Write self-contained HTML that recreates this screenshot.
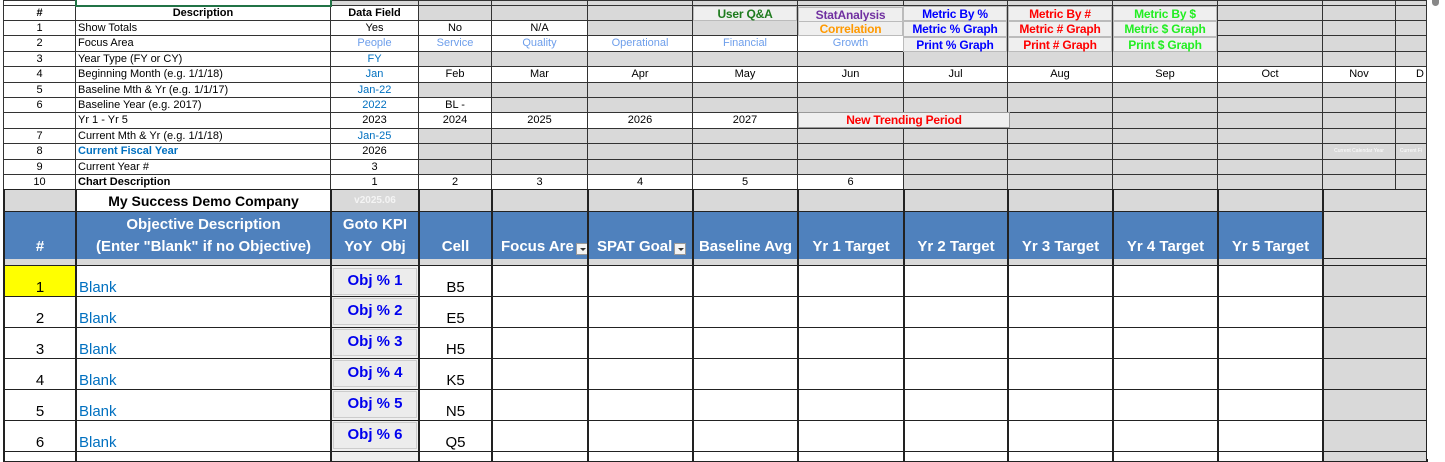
<!DOCTYPE html>
<html><head><meta charset="utf-8"><style>
*{box-sizing:border-box;margin:0;padding:0}
body{width:1445px;height:459px;overflow:hidden;background:#fff;font-family:"Liberation Sans",Arial,sans-serif;position:relative}
table{border-collapse:collapse;table-layout:fixed;position:absolute;left:3px}
td{border:1px solid #333;background:#d9d9d9;font-size:11px;white-space:nowrap;overflow:hidden;padding:0 2px;line-height:1;text-align:center;color:#000}
td.w{background:#fff}
td.l{text-align:left}
.b{font-weight:bold}
.pb{color:#6d9eeb}
.db{color:#0070c0}
#bot td{border-width:1px 2px;border-color:#222}
#bot td.h{background:#4f81bd;color:#fff;font-weight:bold;font-size:15px;line-height:22px;vertical-align:bottom;padding-bottom:0;border-color:#4f81bd #222}
#bot td.n{font-size:15px;vertical-align:bottom;padding-bottom:1px}
.btn{position:absolute;background:#efefef;border:1px solid #bbb;font-weight:bold;font-size:12px;text-align:center;line-height:14px;font-family:"Liberation Sans",Arial,sans-serif;letter-spacing:-0.2px}
.obj{position:absolute;left:333px;width:84px;height:27px;background:#ececec;border:1px solid #ccc;color:#0000ee;font-weight:bold;font-size:15px;text-align:center;line-height:24px}
.dd{display:inline-block;width:12px;height:12px;background:#f4f4f4;border:1px solid #999;vertical-align:bottom;position:relative;margin-left:2px;margin-bottom:3px}
.dd:after{content:"";position:absolute;left:3px;top:4px;border:3px solid transparent;border-top:3px solid #333}
.sb{position:absolute;left:1427px;top:0;width:18px;height:459px;background:#fff}
.sb div{position:absolute;left:5px;top:0;width:7px;height:6px;background:#888;border-radius:0 0 4px 4px}
</style></head><body>
<table id="top" style="top:0;width:1423px">
<colgroup><col style="width:72px"><col style="width:255px"><col style="width:88px"><col style="width:73px"><col style="width:96px"><col style="width:105px"><col style="width:105px"><col style="width:106px"><col style="width:104px"><col style="width:105px"><col style="width:105px"><col style="width:105px"><col style="width:73px"><col style="width:31px"></colgroup>
<tr style="height:5px"><td class="w"></td><td class="w" style="border:2px solid #217346;border-top:0"></td><td></td><td></td><td></td><td></td><td></td><td></td><td></td><td></td><td></td><td></td><td></td><td></td></tr>
<tr style="height:15px"><td class="w b">#</td><td class="w b">Description</td><td class="w b">Data Field</td><td></td><td></td><td></td><td></td><td></td><td></td><td></td><td></td><td></td><td></td><td></td></tr>
<tr style="height:15px"><td class="w">1</td><td class="w l">Show Totals</td><td class="w">Yes</td><td class="w">No</td><td class="w">N/A</td><td></td><td></td><td></td><td></td><td></td><td></td><td></td><td></td><td></td></tr>
<tr style="height:16px"><td class="w">2</td><td class="w l">Focus Area</td><td class="w pb">People</td><td class="w pb">Service</td><td class="w pb">Quality</td><td class="w pb">Operational</td><td class="w pb">Financial</td><td class="w pb">Growth</td><td></td><td></td><td></td><td></td><td></td><td></td></tr>
<tr style="height:15px"><td class="w">3</td><td class="w l">Year Type (FY or CY)</td><td class="w db">FY</td><td></td><td></td><td></td><td></td><td></td><td></td><td></td><td></td><td></td><td></td><td></td></tr>
<tr style="height:16px"><td class="w">4</td><td class="w l">Beginning Month (e.g. 1/1/18)</td><td class="w db">Jan</td><td class="w">Feb</td><td class="w">Mar</td><td class="w">Apr</td><td class="w">May</td><td class="w">Jun</td><td class="w">Jul</td><td class="w">Aug</td><td class="w">Sep</td><td class="w">Oct</td><td class="w">Nov</td><td class="w" style="text-align:right">D</td></tr>
<tr style="height:15px"><td class="w">5</td><td class="w l">Baseline Mth &amp; Yr (e.g. 1/1/17)</td><td class="w db">Jan-22</td><td></td><td></td><td></td><td></td><td></td><td></td><td></td><td></td><td></td><td></td><td></td></tr>
<tr style="height:15px"><td class="w">6</td><td class="w l">Baseline Year (e.g. 2017)</td><td class="w db">2022</td><td class="w">BL -</td><td></td><td></td><td></td><td></td><td></td><td></td><td></td><td></td><td></td><td></td></tr>
<tr style="height:16px"><td class="w"></td><td class="w l">Yr 1 - Yr 5</td><td class="w">2023</td><td class="w">2024</td><td class="w">2025</td><td class="w">2026</td><td class="w">2027</td><td></td><td></td><td></td><td></td><td></td><td></td><td></td></tr>
<tr style="height:15px"><td class="w">7</td><td class="w l">Current Mth &amp; Yr (e.g. 1/1/18)</td><td class="w db">Jan-25</td><td></td><td></td><td></td><td></td><td></td><td></td><td></td><td></td><td></td><td></td><td></td></tr>
<tr style="height:16px"><td class="w">8</td><td class="w l b db">Current Fiscal Year</td><td class="w">2026</td><td></td><td></td><td></td><td></td><td></td><td></td><td></td><td></td><td></td><td style="color:#fff;font-size:5px">Current Calendar Year</td><td style="color:#fff;font-size:5px">Current Fi</td></tr>
<tr style="height:15px"><td class="w">9</td><td class="w l">Current Year #</td><td class="w">3</td><td></td><td></td><td></td><td></td><td></td><td></td><td></td><td></td><td></td><td></td><td></td></tr>
<tr style="height:15px"><td class="w">10</td><td class="w l b">Chart Description</td><td class="w">1</td><td class="w">2</td><td class="w">3</td><td class="w">4</td><td class="w">5</td><td class="w">6</td><td></td><td></td><td></td><td></td><td></td><td></td></tr>
</table>
<table id="bot" style="top:189px;width:1423px">
<colgroup><col style="width:72px"><col style="width:255px"><col style="width:88px"><col style="width:73px"><col style="width:96px"><col style="width:105px"><col style="width:105px"><col style="width:106px"><col style="width:104px"><col style="width:105px"><col style="width:105px"><col style="width:105px"><col style="width:104px"></colgroup>
<tr style="height:22px"><td></td><td class="w b" style="font-size:14px">My Success Demo Company</td><td class="b" style="color:#f4f4f4;font-size:10px">v2025.06</td><td></td><td></td><td></td><td></td><td></td><td></td><td></td><td></td><td></td><td></td></tr>
<tr style="height:47px"><td class="h">#</td><td class="h">Objective Description<br>(Enter "Blank" if no Objective)</td><td class="h">Goto KPI<br>YoY&nbsp; Obj</td><td class="h">Cell</td><td class="h" style="text-align:left;padding-left:8px">Focus Are<span class="dd"></span></td><td class="h" style="text-align:left;padding-left:8px">SPAT Goal<span class="dd"></span></td><td class="h">Baseline Avg</td><td class="h">Yr 1 Target</td><td class="h">Yr 2 Target</td><td class="h">Yr 3 Target</td><td class="h">Yr 4 Target</td><td class="h">Yr 5 Target</td><td></td></tr>
<tr style="height:7px"><td></td><td></td><td></td><td></td><td></td><td></td><td></td><td></td><td></td><td></td><td></td><td></td><td></td></tr>
<tr style="height:31px"><td class="n" style="background:#ffff00">1</td><td class="w l db n">Blank</td><td style="background:#efefef"></td><td class="w n">B5</td><td class="w"></td><td class="w"></td><td class="w"></td><td class="w"></td><td class="w"></td><td class="w"></td><td class="w"></td><td class="w"></td><td></td></tr>
<tr style="height:31px"><td class="w n">2</td><td class="w l db n">Blank</td><td style="background:#efefef"></td><td class="w n">E5</td><td class="w"></td><td class="w"></td><td class="w"></td><td class="w"></td><td class="w"></td><td class="w"></td><td class="w"></td><td class="w"></td><td></td></tr>
<tr style="height:31px"><td class="w n">3</td><td class="w l db n">Blank</td><td style="background:#efefef"></td><td class="w n">H5</td><td class="w"></td><td class="w"></td><td class="w"></td><td class="w"></td><td class="w"></td><td class="w"></td><td class="w"></td><td class="w"></td><td></td></tr>
<tr style="height:31px"><td class="w n">4</td><td class="w l db n">Blank</td><td style="background:#efefef"></td><td class="w n">K5</td><td class="w"></td><td class="w"></td><td class="w"></td><td class="w"></td><td class="w"></td><td class="w"></td><td class="w"></td><td class="w"></td><td></td></tr>
<tr style="height:31px"><td class="w n">5</td><td class="w l db n">Blank</td><td style="background:#efefef"></td><td class="w n">N5</td><td class="w"></td><td class="w"></td><td class="w"></td><td class="w"></td><td class="w"></td><td class="w"></td><td class="w"></td><td class="w"></td><td></td></tr>
<tr style="height:31px"><td class="w n">6</td><td class="w l db n">Blank</td><td style="background:#efefef"></td><td class="w n">Q5</td><td class="w"></td><td class="w"></td><td class="w"></td><td class="w"></td><td class="w"></td><td class="w"></td><td class="w"></td><td class="w"></td><td></td></tr>
<tr style="height:10px"><td class="w"></td><td class="w"></td><td style="background:#efefef"></td><td class="w"></td><td class="w"></td><td class="w"></td><td class="w"></td><td class="w"></td><td class="w"></td><td class="w"></td><td class="w"></td><td class="w"></td><td></td></tr>
</table>
<div class="btn" style="left:693px;top:6px;width:104px;height:15px;color:#1e7b1e">User Q&amp;A</div>
<div class="btn" style="left:798px;top:7px;width:105px;height:15px;color:#7030a0">StatAnalysis</div>
<div class="btn" style="left:798px;top:21px;width:105px;height:15px;color:#ff9900">Correlation</div>
<div class="btn" style="left:903px;top:6px;width:104px;height:15px;color:#0000ff">Metric By %</div>
<div class="btn" style="left:903px;top:21px;width:104px;height:16px;color:#0000ff">Metric % Graph</div>
<div class="btn" style="left:903px;top:37px;width:104px;height:15px;color:#0000ff">Print % Graph</div>
<div class="btn" style="left:1008px;top:6px;width:104px;height:15px;color:#ff0000">Metric By #</div>
<div class="btn" style="left:1008px;top:21px;width:104px;height:16px;color:#ff0000">Metric # Graph</div>
<div class="btn" style="left:1008px;top:37px;width:104px;height:15px;color:#ff0000">Print # Graph</div>
<div class="btn" style="left:1113px;top:6px;width:104px;height:15px;color:#22ee22">Metric By $</div>
<div class="btn" style="left:1113px;top:21px;width:104px;height:16px;color:#22ee22">Metric $ Graph</div>
<div class="btn" style="left:1113px;top:37px;width:104px;height:15px;color:#22ee22">Print $ Graph</div>
<div class="btn" style="left:798px;top:112px;width:212px;height:16px;color:#ff0000;border-color:#999">New Trending Period</div>
<div class="obj" style="top:268px">Obj % 1</div>
<div class="obj" style="top:298px">Obj % 2</div>
<div class="obj" style="top:329px">Obj % 3</div>
<div class="obj" style="top:360px">Obj % 4</div>
<div class="obj" style="top:391px">Obj % 5</div>
<div class="obj" style="top:422px">Obj % 6</div>
<div class="sb"><div></div></div>
</body></html>
